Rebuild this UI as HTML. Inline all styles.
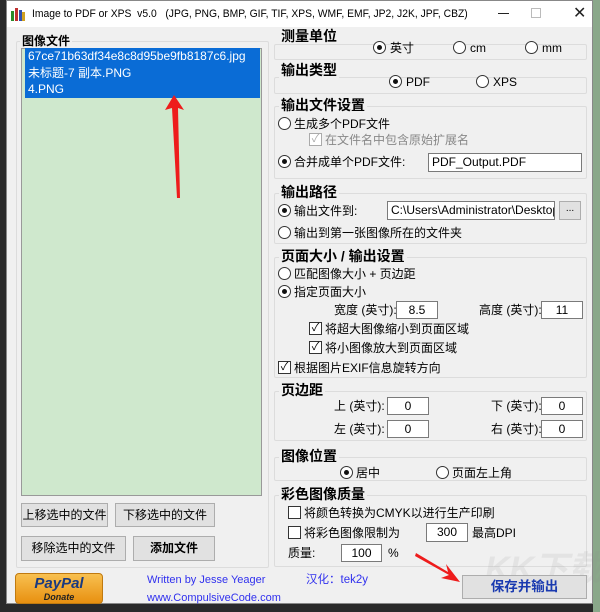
<!DOCTYPE html>
<html><head><meta charset="utf-8"><style>
*{margin:0;padding:0;box-sizing:border-box}
body{width:600px;height:612px;background:#2a2a2a;position:relative;overflow:hidden;font-family:"Liberation Sans","Noto Sans CJK SC",sans-serif;font-size:12px;line-height:14px;color:#000}
.a{position:absolute;white-space:nowrap}
.win{position:absolute;left:6px;top:0;width:587px;height:604px;background:#f0f0f0;border:1px solid #888}
.tb{position:absolute;left:0;top:0;width:100%;height:26px;background:#fff}
.g{position:absolute;border:1px solid #dcdcdc;border-radius:2px}
.gl{position:absolute;background:#f0f0f0;font-weight:bold;font-size:14px;padding:0 2px;line-height:16px}
.in{position:absolute;background:#fff;border:1px solid #7a7a7a;font-size:12px;line-height:16px;padding-left:3px}
.c{text-align:center;padding:0}
.r{position:absolute;width:13px;height:13px;border:1px solid #333;border-radius:50%;background:#fff}
.r.on::after{content:"";position:absolute;left:3px;top:3px;width:5px;height:5px;border-radius:50%;background:#111}
.k{position:absolute;width:13px;height:13px;border:1px solid #333;background:#fff;font-size:11px;line-height:11px;text-align:center}
.btn{position:absolute;background:#e1e1e1;border:1px solid #adadad;text-align:center;font-size:12px}
</style></head><body>
<div style="position:absolute;left:593px;top:0;width:7px;height:612px;background:#8aa88a"></div>
<div class="win">
<div class="tb">
 <div class="a" style="left:4px;top:6px;width:14px;height:14px">
  <div style="position:absolute;left:0;top:4px;width:3px;height:10px;background:#2a8a2a"></div>
  <div style="position:absolute;left:4px;top:1px;width:3px;height:13px;background:#c03030"></div>
  <div style="position:absolute;left:8px;top:3px;width:3px;height:11px;background:#3050b0"></div>
  <div style="position:absolute;left:11px;top:5px;width:3px;height:9px;background:#d0a020"></div>
 </div>
 <div class="a" style="left:25px;top:6px;font-size:11px;transform:scaleX(0.94);transform-origin:0 0">Image to PDF or XPS&nbsp; v5.0&nbsp;&nbsp; (JPG, PNG, BMP, GIF, TIF, XPS, WMF, EMF, JP2, J2K, JPF, CBZ)</div>
 <div class="a" style="left:491px;top:12px;width:11px;height:1px;background:#222"></div>
 <div class="a" style="left:524px;top:7px;width:10px;height:10px;border:1px solid #bbb"></div>
 <div class="a" style="left:566px;top:4px;font-size:16px;line-height:18px;color:#222">✕</div>
</div>
<!-- left group -->
<div class="g" style="left:9px;top:40px;width:253px;height:527px"></div>
<div class="gl" style="left:13px;top:32px;font-size:12px">图像文件</div>
<div class="a" style="left:14px;top:47px;width:241px;height:448px;background:#cfe8cd;border:1px solid #999"></div>
<div class="a" style="left:18px;top:47px;width:235px;height:50px;background:#0a6cd6;color:#fff;font-size:12px;line-height:16.5px;padding:0 3px">67ce71b63df34e8c8d95be9fb8187c6.jpg<br>未标题-7 副本.PNG<br>4.PNG</div>
<div class="btn" style="left:14px;top:502px;width:87px;height:24px;line-height:22px">上移选中的文件</div>
<div class="btn" style="left:108px;top:502px;width:100px;height:24px;line-height:22px">下移选中的文件</div>
<div class="btn" style="left:14px;top:535px;width:105px;height:25px;line-height:23px">移除选中的文件</div>
<div class="btn" style="left:126px;top:535px;width:82px;height:25px;line-height:23px;font-weight:bold">添加文件</div>
<div class="a" style="left:8px;top:572px;width:88px;height:31px;border-radius:4px;background:linear-gradient(#f8c050,#e89010);border:1px solid #c07a10;text-align:center;font-style:italic;font-weight:bold;color:#1a3a80">
 <div style="font-size:15px;line-height:16px;margin-top:2px">PayPal</div><div style="font-size:9px;line-height:10px;color:#222">Donate</div></div>
<div class="a" style="left:140px;top:572px;color:#3030ee;font-size:11px">Written by Jesse Yeager</div>
<div class="a" style="left:140px;top:590px;color:#3030ee;font-size:11px">www.CompulsiveCode.com</div>
<div class="a" style="left:299px;top:572px;color:#3030ee;font-size:11.5px">汉化：tek2y</div>
<!-- right groups -->
<div class="g" style="left:267px;top:43px;width:313px;height:16px"></div>
<div class="gl" style="left:272px;top:27px">测量单位</div>
<div class="r on" style="left:366px;top:40px"></div><div class="a" style="left:383px;top:40px">英寸</div>
<div class="r" style="left:446px;top:40px"></div><div class="a" style="left:463px;top:40px">cm</div>
<div class="r" style="left:518px;top:40px"></div><div class="a" style="left:535px;top:40px">mm</div>

<div class="g" style="left:267px;top:76px;width:313px;height:17px"></div>
<div class="gl" style="left:272px;top:61px">输出类型</div>
<div class="r on" style="left:382px;top:74px"></div><div class="a" style="left:399px;top:74px">PDF</div>
<div class="r" style="left:469px;top:74px"></div><div class="a" style="left:486px;top:74px">XPS</div>

<div class="g" style="left:267px;top:105px;width:313px;height:73px"></div>
<div class="gl" style="left:272px;top:96px">输出文件设置</div>
<div class="r" style="left:271px;top:116px"></div><div class="a" style="left:287px;top:116px">生成多个PDF文件</div>
<div class="k" style="left:302px;top:132px;border-color:#aaa;color:#aaa">✓</div><div class="a" style="left:318px;top:132px;color:#888">在文件名中包含原始扩展名</div>
<div class="r on" style="left:271px;top:154px"></div><div class="a" style="left:287px;top:154px">合并成单个PDF文件:</div>
<div class="in" style="left:421px;top:152px;width:154px;height:19px">PDF_Output.PDF</div>

<div class="g" style="left:267px;top:192px;width:313px;height:51px"></div>
<div class="gl" style="left:272px;top:183px">输出路径</div>
<div class="r on" style="left:271px;top:203px"></div><div class="a" style="left:287px;top:203px">输出文件到:</div>
<div class="in" style="left:380px;top:200px;width:168px;height:19px;overflow:hidden">C:\Users\Administrator\Desktop</div>
<div class="btn" style="left:552px;top:200px;width:22px;height:19px;line-height:14px;font-size:10px">...</div>
<div class="r" style="left:271px;top:225px"></div><div class="a" style="left:287px;top:225px">输出到第一张图像所在的文件夹</div>

<div class="g" style="left:267px;top:256px;width:313px;height:121px"></div>
<div class="gl" style="left:272px;top:247px">页面大小 / 输出设置</div>
<div class="r" style="left:271px;top:266px"></div><div class="a" style="left:287px;top:266px">匹配图像大小 + 页边距</div>
<div class="r on" style="left:271px;top:284px"></div><div class="a" style="left:287px;top:284px">指定页面大小</div>
<div class="a" style="left:327px;top:302px">宽度 (英寸):</div>
<div class="in c" style="left:389px;top:300px;width:42px;height:18px">8.5</div>
<div class="a" style="left:472px;top:302px">高度 (英寸):</div>
<div class="in c" style="left:534px;top:300px;width:42px;height:18px">11</div>
<div class="k" style="left:302px;top:321px">✓</div><div class="a" style="left:318px;top:321px">将超大图像缩小到页面区域</div>
<div class="k" style="left:302px;top:340px">✓</div><div class="a" style="left:318px;top:340px">将小图像放大到页面区域</div>
<div class="k" style="left:271px;top:360px">✓</div><div class="a" style="left:287px;top:360px">根据图片EXIF信息旋转方向</div>

<div class="g" style="left:267px;top:390px;width:313px;height:50px"></div>
<div class="gl" style="left:272px;top:381px">页边距</div>
<div class="a" style="left:327px;top:398px">上 (英寸):</div>
<div class="in c" style="left:380px;top:396px;width:42px;height:18px">0</div>
<div class="a" style="left:484px;top:398px">下 (英寸):</div>
<div class="in c" style="left:534px;top:396px;width:42px;height:18px">0</div>
<div class="a" style="left:327px;top:421px">左 (英寸):</div>
<div class="in c" style="left:380px;top:419px;width:42px;height:18px">0</div>
<div class="a" style="left:484px;top:421px">右 (英寸):</div>
<div class="in c" style="left:534px;top:419px;width:42px;height:18px">0</div>

<div class="g" style="left:267px;top:456px;width:313px;height:24px"></div>
<div class="gl" style="left:272px;top:447px">图像位置</div>
<div class="r on" style="left:333px;top:465px"></div><div class="a" style="left:349px;top:465px">居中</div>
<div class="r" style="left:429px;top:465px"></div><div class="a" style="left:445px;top:465px">页面左上角</div>

<div class="g" style="left:267px;top:494px;width:313px;height:72px"></div>
<div class="gl" style="left:272px;top:485px">彩色图像质量</div>
<div class="k" style="left:281px;top:505px"></div><div class="a" style="left:297px;top:505px">将颜色转换为CMYK以进行生产印刷</div>
<div class="k" style="left:281px;top:525px"></div><div class="a" style="left:297px;top:525px">将彩色图像限制为</div>
<div class="in c" style="left:419px;top:522px;width:42px;height:19px">300</div>
<div class="a" style="left:465px;top:525px">最高DPI</div>
<div class="a" style="left:281px;top:545px">质量:</div>
<div class="in c" style="left:334px;top:543px;width:41px;height:18px">100</div>
<div class="a" style="left:381px;top:545px">%</div>

<div class="a" style="left:478px;top:548px;font-size:34px;line-height:40px;font-weight:bold;font-style:italic;color:rgba(140,140,140,0.12)">KK下载</div>
<div class="btn" style="left:455px;top:574px;width:125px;height:24px;line-height:22px;font-weight:bold;font-size:13.5px;color:#1a3ab0">保存并输出</div>
</div>
<svg class="a" style="left:0;top:0" width="600" height="612">
 <polygon points="174,95 165,110 172,108 177,198 180,198 178,108 184,110" fill="#ee1c1c"/>
 <polygon points="416,553 448,572 446,564 460,582 441,578 449,575 415,556" fill="#ee1c1c"/>
</svg>
</body></html>
